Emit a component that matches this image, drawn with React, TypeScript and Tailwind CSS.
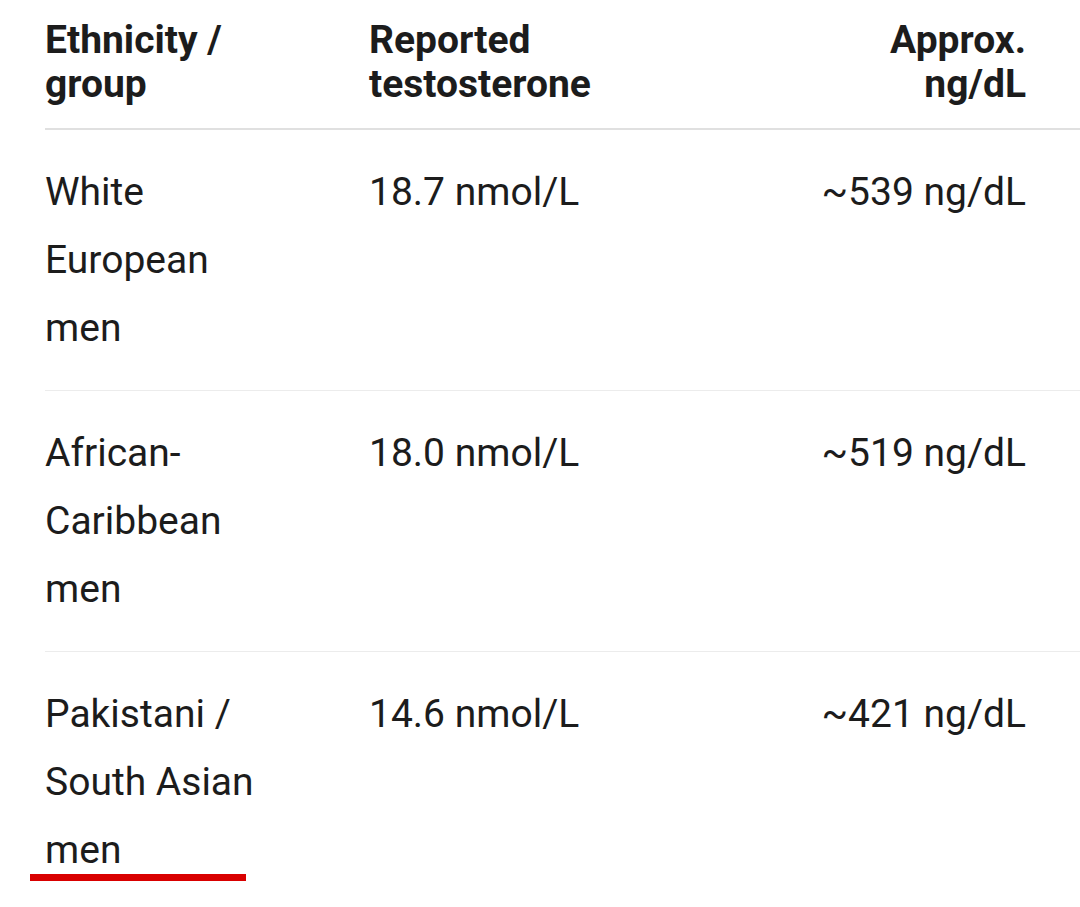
const rows = [
  { group: "White European men", nmol: "18.7 nmol/L", ng: "~539 ng/dL" },
  { group: "African-Caribbean men", nmol: "18.0 nmol/L", ng: "~519 ng/dL" },
  { group: "Pakistani / South Asian men", nmol: "14.6 nmol/L", ng: "~421 ng/dL" },
];

export default function App() {
  return (
    <div
      className="relative h-[907px] w-[1080px] overflow-hidden bg-white pl-[45px] text-[#1c1c1c]"
      style={{ fontFamily: "Roboto, 'Noto Sans', sans-serif" }}
    >
      {/* Header */}
      <div className="grid grid-cols-[324px_437px_274px] border-b-2 border-[#e0e0e0] pt-[18px] pb-[22px] text-[39px] leading-[44px] font-bold">
        <div className="pr-[84px]">Ethnicity / group</div>
        <div className="pr-[100px]">Reported testosterone</div>
        <div className="pr-[54px] text-right">Approx. ng/dL</div>
      </div>

      {/* Rows */}
      {rows.map((r) => (
        <div
          key={r.group}
          className="grid grid-cols-[324px_437px_274px] border-b border-[#ececec] py-[28px] text-[39px] leading-[68px]"
        >
          <div className="pr-[84px]">{r.group}</div>
          <div className="pr-[100px]">{r.nmol}</div>
          <div className="pr-[54px] text-right">{r.ng}</div>
        </div>
      ))}

      {/* red marker under last cell */}
      <div className="absolute top-[874px] left-[30px] h-[7px] w-[216px] bg-[#d90000]" />
    </div>
  );
}
